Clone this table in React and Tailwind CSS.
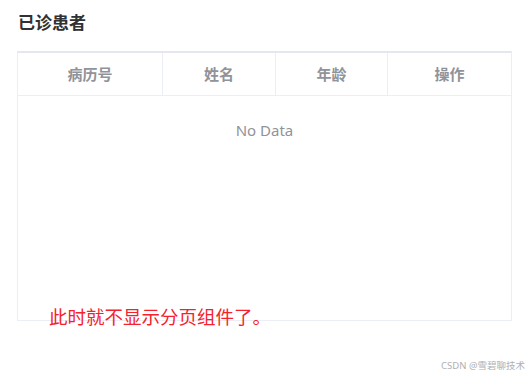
export default function App() {
  const cols = [
    { label: '病历号', w: 'w-[145px]' },
    { label: '姓名', w: 'w-[113px]' },
    { label: '年龄', w: 'w-[112px]' },
    { label: '操作', w: 'flex-1' },
  ]

  return (
    <div
      className="relative w-[529px] h-[378px] bg-white overflow-hidden"
      style={{ fontFamily: '"Noto Sans", "Noto Sans CJK SC", sans-serif' }}
    >
      <div className="pl-[17px] pt-[11px]">
        <h2 className="text-[17px] font-bold text-[#303133] leading-[24px] pl-[1px]">已诊患者</h2>
        <div className="mt-[16px] w-[495px] h-[270px] border border-[#ebeef5] border-t-2 border-t-[#e4e7ed] flex flex-col">
          <div className="flex h-[43px] border-b border-[#ebeef5]">
            {cols.map((c, i) => (
              <div
                key={c.label}
                className={`${c.w} flex items-center justify-center text-[15px] font-bold text-[#909399] ${i < cols.length - 1 ? 'border-r border-[#ebeef5]' : ''}`}
              >
                {c.label}
              </div>
            ))}
          </div>
          <div className="flex justify-center pt-[23px] text-[15px] text-[#909399] leading-[22px]">No Data</div>
        </div>
      </div>

      <div className="absolute left-[49px] top-[305px] text-[18.5px] leading-[24px] text-[#f5222d]">
        此时就不显示分页组件了。
      </div>

      <div className="absolute right-[4px] top-[360px] text-[9.5px] leading-[12px] text-[#b0b0b0]">
        CSDN @雪碧聊技术
      </div>
    </div>
  )
}
